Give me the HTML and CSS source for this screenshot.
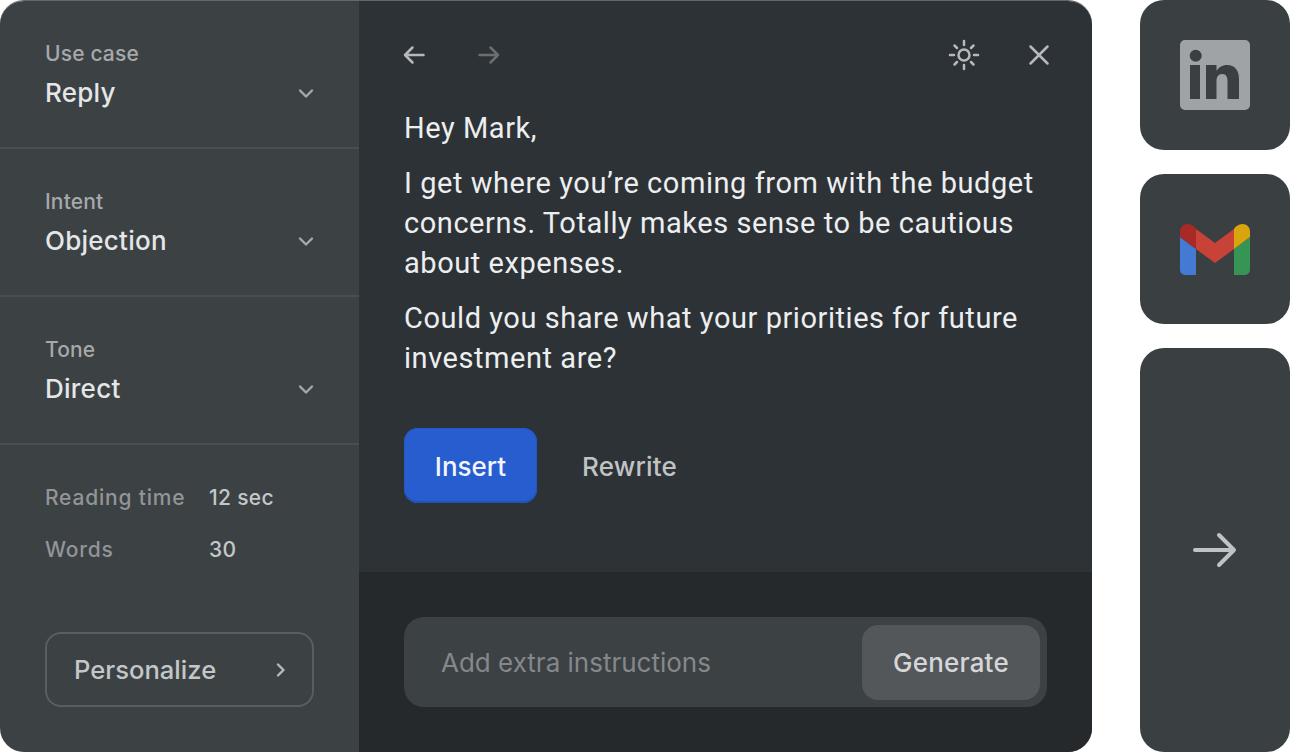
FILE: index.html
```html
<!DOCTYPE html>
<html lang="en">
<head>
<meta charset="utf-8">
<title>Reply composer</title>
<link rel="stylesheet" href="styles.css">
</head>
<body>
<div class="page">
  <div class="panel">
    <aside class="side">
      <section class="field">
        <div class="label">Use case</div>
        <div class="value-row"><span class="value">Reply</span>
          <svg class="chev" width="24" height="24" viewBox="0 0 24 24"><path d="M6 8.500l6 6 6-6"/></svg></div>
      </section>
      <section class="field">
        <div class="label">Intent</div>
        <div class="value-row"><span class="value">Objection</span>
          <svg class="chev" width="24" height="24" viewBox="0 0 24 24"><path d="M6 8.500l6 6 6-6"/></svg></div>
      </section>
      <section class="field">
        <div class="label">Tone</div>
        <div class="value-row"><span class="value">Direct</span>
          <svg class="chev" width="24" height="24" viewBox="0 0 24 24"><path d="M6 8.500l6 6 6-6"/></svg></div>
      </section>
      <section class="stats">
        <div class="stat"><span class="stat-key">Reading time</span><span class="stat-val">12 sec</span></div>
        <div class="stat"><span class="stat-key">Words</span><span class="stat-val">30</span></div>
      </section>
      <button class="personalize"><span>Personalize</span>
        <svg class="chev-r" width="24" height="24" viewBox="0 0 24 24"><path d="M9 6.500l5.500 5.500L9 17.500"/></svg></button>
    </aside>
    <main class="main">
      <div class="content">
        <div class="toolbar">
          <div class="tool-group">
            <svg class="ic" width="24" height="24" viewBox="0 0 24 24"><path d="M21.500 12H3M10.500 4.500L3 12l7.500 7.500"/></svg>
            <svg class="ic dim" width="24" height="24" viewBox="0 0 24 24"><path d="M2.500 12H21M13.500 4.500L21 12l-7.500 7.500"/></svg>
          </div>
          <div class="tool-group wide">
            <svg class="ic" width="32" height="32" viewBox="0 0 32 32"><circle cx="16" cy="16" r="5.500"/><path d="M16 2v4M16 26v4M2 16h4M26 16h4M6.500 6.500l2.500 2.500M23 23l2.500 2.500M6.500 25.500L9 23M23 9l2.500-2.500"/></svg>
            <svg class="ic" width="24" height="24" viewBox="0 0 24 24"><path d="M3.500 3.500l17 17M20.500 3.500l-17 17"/></svg>
          </div>
        </div>
        <div class="message">
          <p>Hey Mark,</p>
          <p>I get where you’re coming from with the budget concerns. Totally makes sense to be cautious about expenses.</p>
          <p>Could you share what your priorities for future investment are?</p>
        </div>
        <div class="actions">
          <button class="insert">Insert</button>
          <button class="rewrite">Rewrite</button>
        </div>
      </div>
      <div class="footer">
        <div class="input-bar">
          <span class="placeholder">Add extra instructions</span>
          <button class="generate">Generate</button>
        </div>
      </div>
    </main>
  </div>
  <div class="rail">
    <div class="tile">
      <svg width="70" height="70" viewBox="0 0 70 70">
        <path class="li-bg" fill-rule="evenodd" d="M5 0h60a5 5 0 0 1 5 5v60a5 5 0 0 1-5 5H5a5 5 0 0 1-5-5V5a5 5 0 0 1 5-5zM10 25v34h10V25zM15.700 9.700a6 6 0 1 0 0 12 6 6 0 0 0 0-12zM26 25v34h10.500V41.500c0-4.500 1.500-7.500 5.800-7.500 4.200 0 5.200 3.200 5.200 7.500V59H59V39c0-9-4.500-14-11.700-14-5.300 0-8.800 2.600-10.800 6v-6z"/>
      </svg>
    </div>
    <div class="tile">
      <svg width="70" height="52" viewBox="0 0 70 52">
        <path fill="#4479d4" d="M0 14l16 12v26H5a5 5 0 0 1-5-5z"/>
        <path fill="#369454" d="M70 14L54 26v26h11a5 5 0 0 0 5-5z"/>
        <path fill="#c84238" d="M16 6l19 14L54 6v20L35 40 16 26z"/>
        <path fill="#a82a26" d="M0 9C0 1 9-2 15.500 5l.5 1v20L0 14z"/>
        <path fill="#d8a50f" d="M70 9c0-8-9-11-15.500-4l-.5 1v20l16-12z"/>
      </svg>
    </div>
    <div class="tile tall">
      <svg class="big-arrow" width="44" height="36" viewBox="0 0 44 36"><path d="M2 18h39M26 3l15 15-15 15"/></svg>
    </div>
  </div>
</div>
</body>
</html>
```
FILE: styles.css
```css
* { box-sizing: border-box; }
html, body { margin: 0; padding: 0; background: #fff; }
body { font-family: Inter, "Liberation Sans", sans-serif; }
.page { width: 1290px; height: 752px; display: flex; justify-content: space-between; overflow: hidden; }
.panel { width: 1092px; height: 752px; display: flex; border-radius: 24px; overflow: hidden; border-top: 1px solid #65686b; }
.side { width: 359px; background: #3c4144; display: flex; flex-direction: column; padding-bottom: 45px; }
.field { height: 148px; padding: 40px 45px 0; border-bottom: 2px solid #4a4e51; }
.label { font-size: 21px; line-height: 26px; font-weight: 500; letter-spacing: .15px; color: #a6a9ac; }
.value-row { display: flex; justify-content: space-between; align-items: center; margin-top: 10px; height: 32px; }
.value { font-size: 26px; line-height: 32px; font-weight: 500; letter-spacing: .25px; color: #e4e6e8; }
.chev { margin-right: -4px; margin-top: 1px; fill: none; stroke: #a6a9ac; stroke-width: 2.400; stroke-linecap: round; stroke-linejoin: round; }
.stats { padding: 39px 45px 0; display: flex; flex-direction: column; gap: 26px; flex: 1; }
.stat { display: flex; height: 26px; align-items: center; font-size: 21px; font-weight: 500; }
.stat-key { width: 164px; color: #929598; letter-spacing: .8px; }
.stat-val { color: #c4c7c9; letter-spacing: .3px; }
.personalize { margin: 0 45px; height: 75px; display: flex; align-items: center; justify-content: space-between; padding: 0 19px 0 27px; background: none; border: 2px solid #5a5d61; border-radius: 16px; color: #c4c7c9; font: 500 25.600px Inter, sans-serif; }
.chev-r { fill: none; stroke: #b6b9bc; stroke-width: 2.400; stroke-linecap: round; stroke-linejoin: round; }
.main { flex: 1; display: flex; flex-direction: column; background: #2d3236; }
.content { height: 571px; padding: 0 45px; }
.toolbar { display: flex; justify-content: space-between; align-items: center; height: 107px; }
.tool-group { display: flex; align-items: center; gap: 51px; margin-left: -2px; }
.tool-group.wide { gap: 47px; margin-right: -4px; margin-left: 0; }
.ic { fill: none; stroke: #b6b9bc; stroke-width: 2.500; stroke-linecap: round; stroke-linejoin: round; }
.ic.dim { stroke: #6b6f72; }
.message { color: #eceeef; font-size: 29px; line-height: 40px; font-family: Roboto, sans-serif; letter-spacing: .55px; }
.message p { margin: 0 0 15px; }
.actions { display: flex; align-items: center; gap: 45px; margin-top: 50px; }
.insert { width: 133px; height: 75px; padding: 2px 0 0; border: none; border-radius: 14px; background: #275dce; box-shadow: inset 0 -2px 0 #2254b8, inset 0 0 0 1px #2558c4; color: #f2f5fb; font: 500 26px Inter, sans-serif; }
.rewrite { background: none; border: none; padding: 2px 0 0; color: #c0c3c5; font: 500 26px Inter, sans-serif; letter-spacing: .2px; }
.footer { flex: 1; background: #25292b; padding: 45px 45px 0; }
.input-bar { width: 643px; height: 90px; background: #3c4144; border-radius: 20px; display: flex; align-items: center; justify-content: space-between; padding: 0 7px 0 37px; }
.placeholder { color: #85888b; font-size: 26px; }
.generate { width: 178px; height: 75px; border: none; border-radius: 16px; background: #53575a; color: #d4d6d8; font: 500 26px Inter, sans-serif; letter-spacing: .2px; }
.rail { width: 150px; display: flex; flex-direction: column; gap: 24px; }
.tile { height: 150px; border-radius: 24px; background: #3a3f42; display: flex; align-items: center; justify-content: center; }
.tile.tall { flex: 1; }
.li-bg { fill: #a0a3a6; }
.big-arrow { fill: none; stroke: #c0c3c6; stroke-width: 4; stroke-linecap: round; stroke-linejoin: round; }
```
